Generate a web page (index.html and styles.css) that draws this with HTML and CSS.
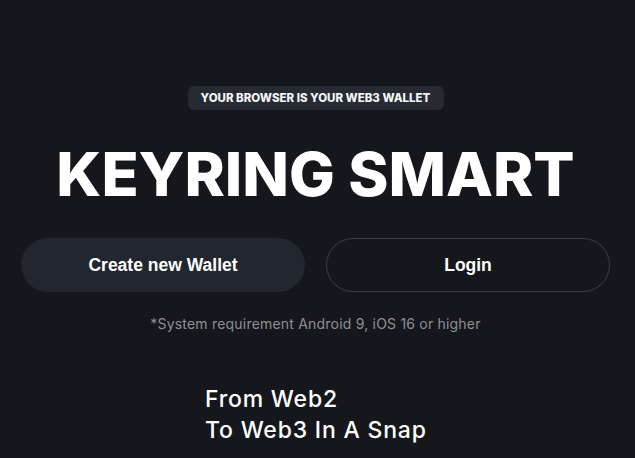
FILE: index.html
```html
<!DOCTYPE html>
<html lang="en">
<head>
<meta charset="utf-8">
<title>Keyring Smart</title>
<link rel="stylesheet" href="styles.css">
</head>
<body>
<main class="hero">
  <div class="badge">YOUR BROWSER IS YOUR WEB3 WALLET</div>
  <h1 class="title">KEYRING SMART</h1>
  <div class="actions">
    <button class="btn btn-primary">Create new Wallet</button>
    <button class="btn btn-outline">Login</button>
  </div>
  <p class="note">*System requirement Android 9, iOS 16 or higher</p>
  <div class="tagline">
    <p>From Web2</p>
    <p>To Web3 In A Snap</p>
  </div>
</main>
</body>
</html>
```

FILE: styles.css
```css
html, body {
  margin: 0;
  padding: 0;
  background: #15171c;
  height: 100%;
  overflow: hidden;
}
body {
  font-family: "Inter", "Open Sans", sans-serif;
  color: #ffffff;
}
.hero {
  display: flex;
  flex-direction: column;
  align-items: center;
  padding: 86px 4px 0 0;
}
.badge {
  height: 24px;
  box-sizing: border-box;
  width: 256px;
  display: flex;
  align-items: center;
  justify-content: center;
  background: #262a33;
  border-radius: 6px;
  font-size: 11.5px;
  font-weight: 800;
  color: #f4f5f7;
}
.title {
  margin: 32px 0 0;
  font-size: 61px;
  line-height: 64px;
  font-weight: 800;
  letter-spacing: 0;
}
.actions {
  display: flex;
  gap: 21px;
  margin-top: 32px;
}
.btn {
  width: 284px;
  height: 54px;
  border-radius: 27px;
  font-family: "Liberation Sans", Arial, sans-serif;
  font-size: 17.5px;
  font-weight: 700;
  color: #ffffff;
  cursor: pointer;
  box-sizing: border-box;
}
.btn-primary {
  background: #22262f;
  border: none;
}
.btn-outline {
  background: transparent;
  border: 1px solid #3b3e46;
}
.note {
  margin: 23px 0 0;
  font-size: 14px;
  line-height: 18px;
  letter-spacing: 0.2px;
  color: #8e9096;
}
.tagline {
  align-self: stretch;
  padding-left: 205px;
  margin-top: 51px;
}
.tagline p {
  margin: 0;
  font-size: 23px;
  line-height: 31px;
  font-weight: 500;
  letter-spacing: 0.8px;
}
```
